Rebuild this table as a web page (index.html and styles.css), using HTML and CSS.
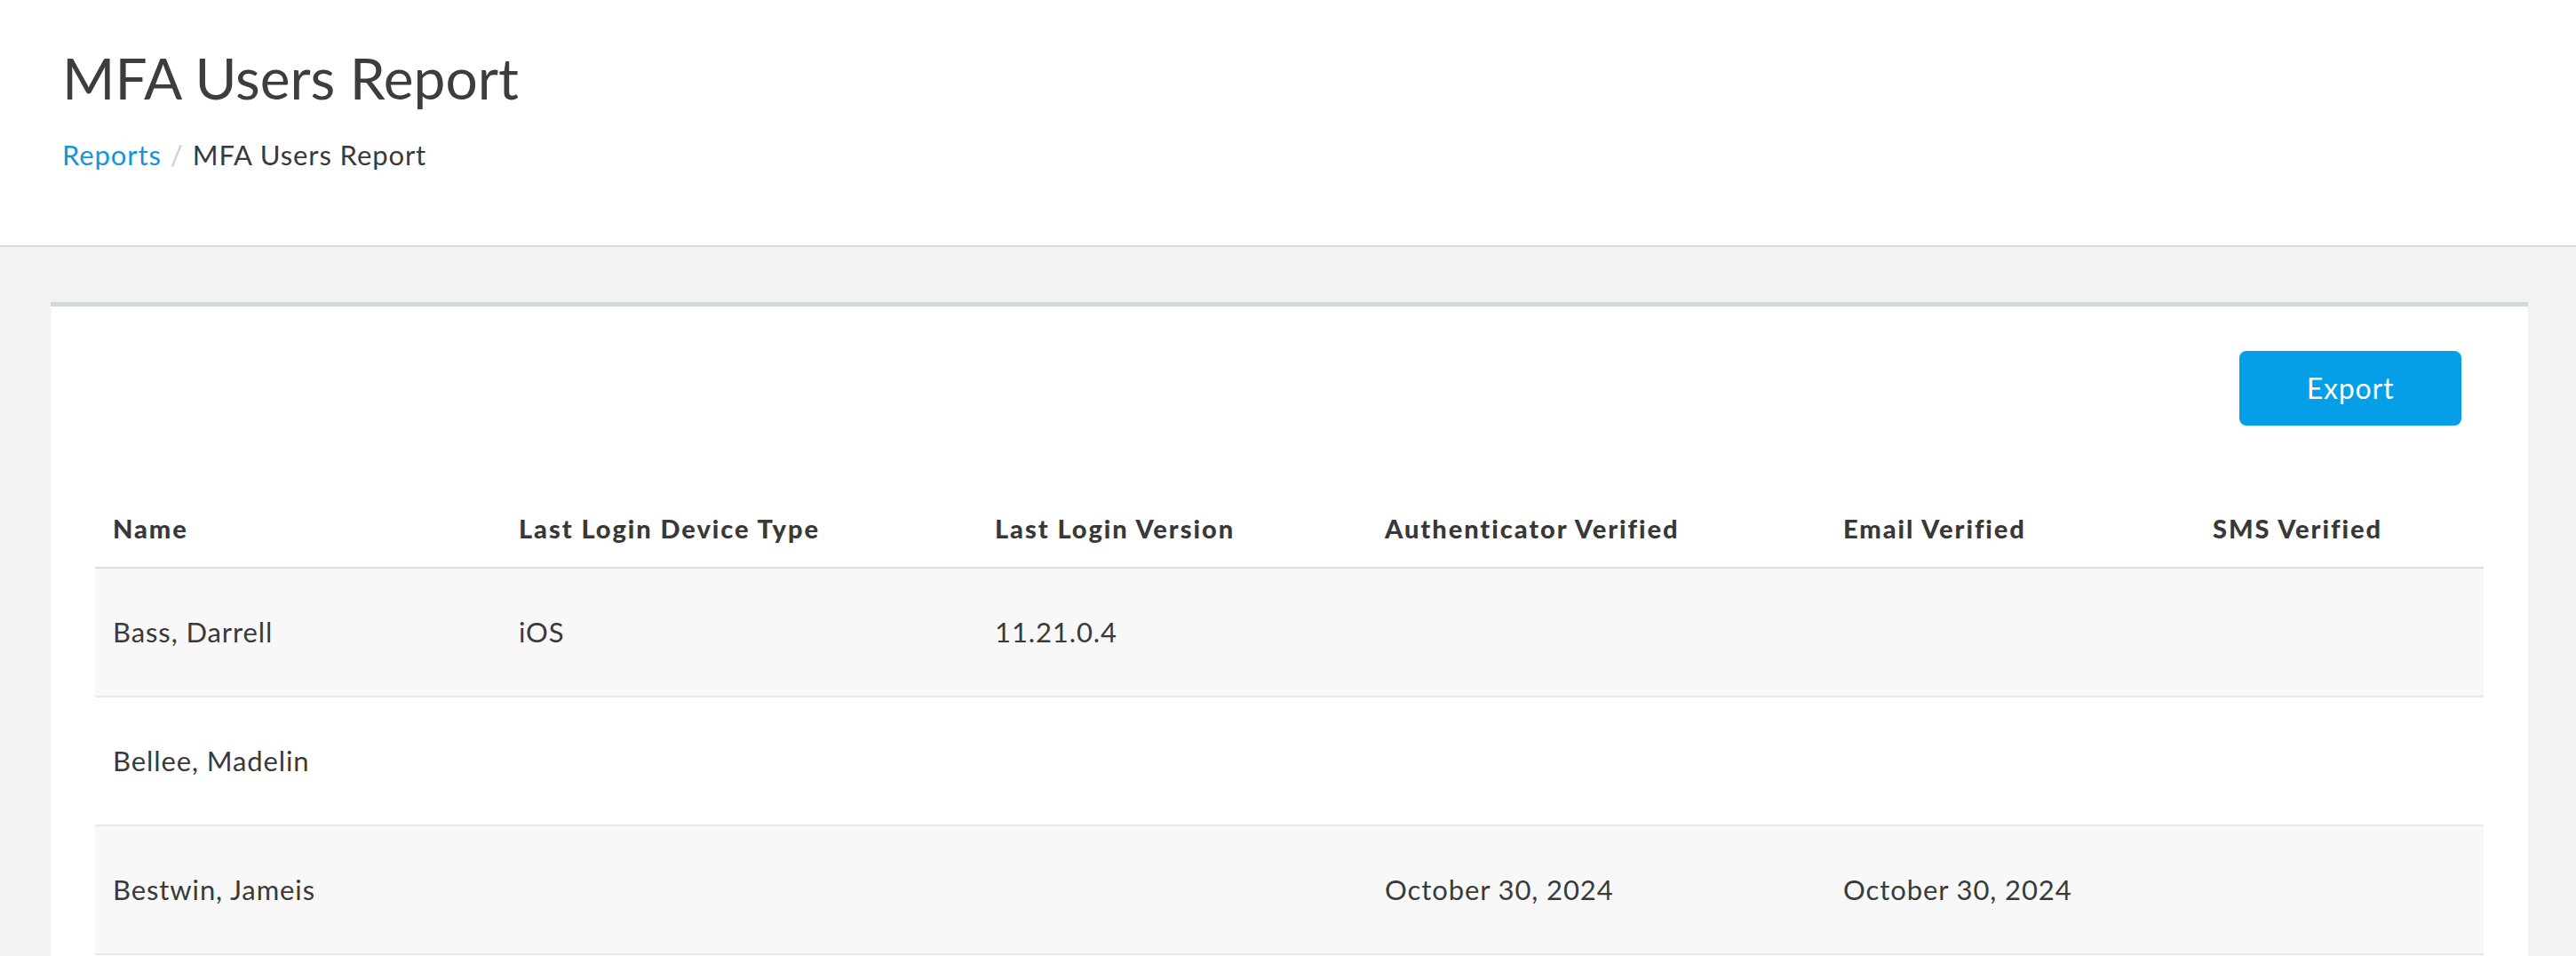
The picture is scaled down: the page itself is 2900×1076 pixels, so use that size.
FILE: index.html
```html
<!DOCTYPE html>
<html lang="en">
<head>
<meta charset="utf-8">
<title>MFA Users Report</title>
<link rel="stylesheet" href="styles.css">
</head>
<body>
<header class="page-header">
  <h1 class="page-title">MFA Users Report</h1>
  <nav class="breadcrumb">
    <a class="crumb-link" href="#">Reports</a>
    <span class="crumb-sep">/</span>
    <span class="crumb-current">MFA Users Report</span>
  </nav>
</header>
<main class="content">
  <section class="card">
    <div class="toolbar">
      <button class="btn-export" type="button">Export</button>
    </div>
    <table class="report">
      <colgroup>
        <col class="c-name">
        <col class="c-device">
        <col class="c-version">
        <col class="c-auth">
        <col class="c-email">
        <col class="c-sms">
      </colgroup>
      <thead>
        <tr>
          <th>Name</th>
          <th>Last Login Device Type</th>
          <th>Last Login Version</th>
          <th>Authenticator Verified</th>
          <th>Email Verified</th>
          <th>SMS Verified</th>
        </tr>
      </thead>
      <tbody>
        <tr>
          <td>Bass, Darrell</td>
          <td>iOS</td>
          <td>11.21.0.4</td>
          <td></td>
          <td></td>
          <td></td>
        </tr>
        <tr>
          <td>Bellee, Madelin</td>
          <td></td>
          <td></td>
          <td></td>
          <td></td>
          <td></td>
        </tr>
        <tr>
          <td>Bestwin, Jameis</td>
          <td></td>
          <td></td>
          <td>October 30, 2024</td>
          <td>October 30, 2024</td>
          <td></td>
        </tr>
      </tbody>
    </table>
  </section>
</main>
</body>
</html>
```
FILE: styles.css
```css
html, body {
  margin: 0;
  padding: 0;
}
body {
  background: #f2f2f2;
  font-family: "Lato", "Liberation Sans", sans-serif;
  color: #3a3a3a;
}
.page-header {
  background: #ffffff;
  border-bottom: 2px solid #d6dadd;
  padding: 50px 70px 84px;
}
.page-title {
  margin: 0 0 29px;
  font-size: 64px;
  line-height: 76.8px;
  font-weight: 400;
  color: #3d3d3d;
}
.breadcrumb {
  font-size: 31px;
  line-height: 36px;
  letter-spacing: 0.9px;
  display: flex;
  gap: 10px;
}
.crumb-link {
  color: #1495da;
  text-decoration: none;
}
.crumb-sep {
  color: #cfcfcf;
}
.crumb-current {
  color: #3a3a3a;
}
.content {
  padding: 62px 54px 0 57px;
}
.card {
  background: #ffffff;
  border-top: 5px solid #d3d8db;
  padding: 50px;
}
.toolbar {
  display: flex;
  justify-content: flex-end;
  padding-right: 25px;
  margin-bottom: 73px;
}
.btn-export {
  width: 250px;
  height: 84px;
  border: none;
  border-radius: 8px;
  background: #049fe6;
  color: #ffffff;
  font-family: inherit;
  font-size: 32px;
  letter-spacing: 0.8px;
  cursor: pointer;
}
.report {
  width: 100%;
  border-collapse: collapse;
  table-layout: fixed;
}
.c-name { width: 457px; }
.c-device { width: 536px; }
.c-version { width: 439px; }
.c-auth { width: 516px; }
.c-email { width: 416px; }
.c-sms { width: 325px; }
.report th {
  text-align: left;
  font-weight: 900;
  font-size: 29px;
  line-height: 34px;
  letter-spacing: 1.95px;
  color: #383838;
  height: 86px;
  padding: 0 20px;
  vertical-align: middle;
  border-bottom: 2px solid #dddddd;
  white-space: nowrap;
}
.report td {
  font-size: 31px;
  line-height: 36px;
  letter-spacing: 0.9px;
  color: #3a3a3a;
  height: 143px;
  padding: 0 20px;
  vertical-align: middle;
  border-bottom: 2px solid #e8e8e8;
}
.report tbody tr:nth-child(odd) {
  background: #f8f8f8;
}
.report tbody tr:nth-child(even) {
  background: #ffffff;
}
```
